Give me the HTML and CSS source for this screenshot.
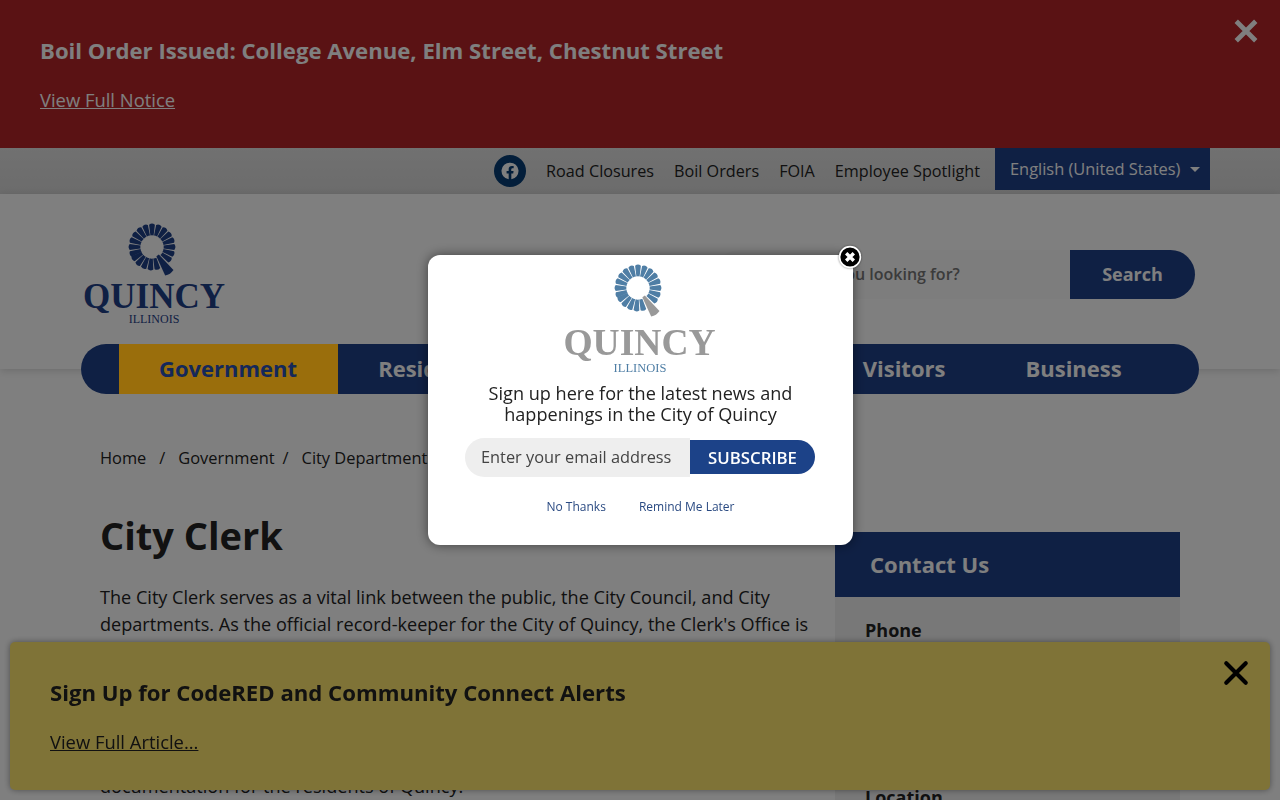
FILE: index.html
```html
<!DOCTYPE html>
<html>
<head>
  <title>City Clerk - Quincy, Illinois</title>
  <link rel="stylesheet" href="styles.css">
</head>
<body>
  <svg class="sprite" width="0" height="0">
    <defs>
      <path id="ray" d="M-1.6,-11.5 L-2.9,-22.3 Q0,-24.6 2.9,-22.3 L1.6,-11.5 Q0,-12 -1.6,-11.5 Z"/>
      <g id="sun">
        <use href="#ray"/>
        <use href="#ray" transform="rotate(18)"/>
        <use href="#ray" transform="rotate(36)"/>
        <use href="#ray" transform="rotate(54)"/>
        <use href="#ray" transform="rotate(72)"/>
        <use href="#ray" transform="rotate(90)"/>
        <use href="#ray" transform="rotate(108)"/>
        <use href="#ray" transform="rotate(126)"/>
        <use href="#ray" transform="rotate(166)"/>
        <use href="#ray" transform="rotate(184)"/>
        <use href="#ray" transform="rotate(202)"/>
        <use href="#ray" transform="rotate(220)"/>
        <use href="#ray" transform="rotate(238)"/>
        <use href="#ray" transform="rotate(252)"/>
        <use href="#ray" transform="rotate(270)"/>
        <use href="#ray" transform="rotate(288)"/>
        <use href="#ray" transform="rotate(306)"/>
        <use href="#ray" transform="rotate(324)"/>
        <use href="#ray" transform="rotate(342)"/>
      </g>
      <path id="tail" d="M-1.5,-10 L-5,-31 Q0,-33 5,-31 L1.5,-10 Z" transform="rotate(146)"/>
    </defs>
  </svg>

  <section class="alert-top">
    <h3>Boil Order Issued: College Avenue, Elm Street, Chestnut Street</h3>
    <a href="#">View Full Notice</a>
    <button class="alert-close" aria-label="Close">
      <svg viewBox="0 0 24 24"><path d="M3 3 L21 21 M21 3 L3 21"/></svg>
    </button>
  </section>

  <div class="utility">
    <div class="utility-inner">
      <a class="fb" href="#" aria-label="Facebook">
        <svg viewBox="0 0 24 24"><path d="M12 2a10 10 0 0 0-1.6 19.9v-7H7.9V12h2.5V9.8c0-2.5 1.5-3.9 3.8-3.9 1.1 0 2.2.2 2.2.2v2.5h-1.3c-1.2 0-1.6.8-1.6 1.6V12h2.8l-.4 2.9h-2.3v7A10 10 0 0 0 12 2z"/></svg>
      </a>
      <a href="#">Road Closures</a>
      <a href="#">Boil Orders</a>
      <a href="#">FOIA</a>
      <a href="#">Employee Spotlight</a>
      <div class="lang">English (United States)<span class="caret"></span></div>
    </div>
  </div>

  <header class="site-header">
    <div class="header-row">
      <a class="logo" href="#">
        <svg class="logo-sun" viewBox="-25 -25 50 50">
          <use href="#sun"/>
          <use href="#tail"/>
        </svg>
        <span class="logo-name">QUINCY</span>
        <span class="logo-state">ILLINOIS</span>
      </a>
      <form class="search">
        <input type="text" placeholder="What are you looking for?">
        <button type="button">Search</button>
      </form>
    </div>
    <nav class="main-nav">
      <a class="active" href="#">Government</a>
      <a href="#">Residents</a>
      <a href="#">Pay</a>
      <a href="#">How Do I</a>
      <a href="#">Visitors</a>
      <a href="#">Business</a>
    </nav>
  </header>

  <div class="breadcrumb">
    <a href="#">Home</a><span>/</span>
    <a href="#">Government</a><span>/</span>
    <a href="#">City Departments</a><span>/</span>
    <a href="#">City Clerk</a>
  </div>

  <main class="content">
    <article class="article">
      <h1>City Clerk</h1>
      <p>The City Clerk serves as a vital link between the public, the City Council, and City departments. As the official record-keeper for the City of Quincy, the Clerk's Office is responsible for maintaining accurate records of all Council proceedings, ordinances, resolutions and other official municipal documents. The office also issues a range of licenses and permits, supports local elections, responds to public records requests and works every day to provide clear, reliable access to public information, meeting agendas, minutes, certified copies and other important records and<br>documentation for the residents of Quincy.</p>
    </article>
    <aside class="contact">
      <h2>Contact Us</h2>
      <div class="contact-body">
        <h4 class="contact-phone">Phone</h4>
        <h4>Location</h4>
      </div>
    </aside>
  </main>

  <div class="overlay"></div>

  <section class="alert-bottom">
    <h3>Sign Up for CodeRED and Community Connect Alerts</h3>
    <a href="#">View Full Article...</a>
    <button class="alert-close" aria-label="Close">
      <svg viewBox="0 0 24 24"><path d="M3 3 L21 21 M21 3 L3 21"/></svg>
    </button>
  </section>

  <div class="modal">
    <button class="modal-close" aria-label="Close">
      <svg viewBox="0 0 24 24"><circle cx="12" cy="12" r="10.4"/><path d="M8.2 8.2 L15.8 15.8 M15.8 8.2 L8.2 15.8"/></svg>
    </button>
    <div class="modal-logo">
      <svg class="logo-sun" viewBox="-25 -25 50 50">
        <use href="#sun"/>
        <use class="tail-grey" href="#tail"/>
      </svg>
      <span class="logo-name">QUINCY</span>
      <span class="logo-state">ILLINOIS</span>
    </div>
    <p class="modal-text">Sign up here for the latest news and happenings in the City of Quincy</p>
    <form class="subscribe">
      <input type="text" placeholder="Enter your email address">
      <button type="button">SUBSCRIBE</button>
    </form>
    <div class="modal-links">
      <a href="#">No Thanks</a>
      <a href="#">Remind Me Later</a>
    </div>
  </div>
</body>
</html>
```

FILE: styles.css
```css
:root {
  --navy: #1f4189;
  --gold: #9a6e0c;
  --red: #b42428;
  --text: #222222;
}

* {
  margin: 0;
  padding: 0;
  box-sizing: border-box;
  font-family: 'Open Sans', 'Liberation Sans', sans-serif;
}

html, body {
  height: 800px;
  overflow: hidden;
}

body {
  background-color: #ffffff;
  color: var(--text);
}

.sprite {
  position: absolute;
}

a {
  color: inherit;
}

button {
  border: 0;
  background: none;
  cursor: pointer;
}

/* top alert */
.alert-top {
  position: relative;
  height: 148px;
  padding: 36px 40px 0;
  background-color: var(--red);
  color: #ffffff;
}

.alert-top h3 {
  font-size: 22.15px;
  font-weight: 700;
  line-height: 28px;
  margin-bottom: 23px;
}

.alert-top a {
  font-size: 18.4px;
  line-height: 26px;
}

.alert-close {
  position: absolute;
  top: 18px;
  right: 21px;
  width: 26px;
  height: 26px;
}

.alert-close svg {
  display: block;
  stroke: #ffffff;
  stroke-width: 4.4;
  fill: none;
}

/* utility bar */
.utility {
  height: 46px;
  background: linear-gradient(#e2e2e2, #d8d8d8);
}

.utility-inner {
  display: flex;
  justify-content: flex-end;
  align-items: flex-start;
  gap: 20px;
  width: 1210px;
  height: 42px;
  line-height: 46px;
  font-size: 16.2px;
}

.utility-inner > a {
  text-decoration: none;
}

.fb {
  display: flex;
  align-items: center;
  justify-content: center;
  width: 32px;
  height: 32px;
  margin-top: 7px;
  border-radius: 50%;
  background-color: #073d74;
}

.fb svg {
  width: 20px;
  height: 20px;
  fill: #ffffff;
}

.lang {
  display: flex;
  align-items: center;
  width: 215px;
  height: 42px;
  margin-left: -5px;
  padding-left: 15px;
  background-color: var(--navy);
  color: #ffffff;
  font-size: 16.4px;
  line-height: 42px;
}

.caret {
  margin-left: 10px;
  border-top: 5px solid #ffffff;
  border-left: 5px solid transparent;
  border-right: 5px solid transparent;
}

/* header */
.site-header {
  position: relative;
  height: 175px;
  padding: 0 81px;
  background-color: #ffffff;
  box-shadow: 0 2px 8px rgba(0, 0, 0, 0.15);
}

.header-row {
  display: flex;
  justify-content: space-between;
  height: 150px;
}

.logo {
  display: flex;
  flex-direction: column;
  align-items: center;
  width: 146px;
  padding-top: 28px;
  text-decoration: none;
  color: var(--navy);
}

.logo-sun {
  display: block;
  width: 50px;
  height: 50px;
  margin-left: -5px;
  overflow: visible;
  fill: var(--navy);
}

.logo-name {
  font-family: 'Liberation Serif', serif;
  font-weight: 700;
  font-size: 35px;
  line-height: 36px;
  margin-top: 7px;
}

.logo-state {
  font-family: 'Liberation Serif', serif;
  font-size: 12px;
  line-height: 14px;
  margin-top: -3px;
}

.search {
  display: flex;
  margin-top: 56px;
  margin-right: 4px;
  height: 49px;
}

.search input {
  width: 355px;
  height: 49px;
  padding: 0 0 2px 47px;
  border: 0;
  border-radius: 25px 0 0 25px;
  background-color: #fbfbfb;
  font-size: 16px;
  font-weight: 600;
}

.search input::placeholder {
  color: #777777;
}

.search button {
  width: 125px;
  height: 49px;
  padding-bottom: 2px;
  border-radius: 0 25px 25px 0;
  background-color: var(--navy);
  color: #ffffff;
  font-size: 18px;
  font-weight: 700;
}

.main-nav {
  display: flex;
  height: 50px;
  padding-left: 38px;
  border-radius: 25px;
  background-color: var(--navy);
}

.main-nav a {
  padding: 0 40px;
  font-size: 22px;
  font-weight: 700;
  line-height: 48px;
  color: #ffffff;
  text-decoration: none;
}

.main-nav a.active {
  position: relative;
  z-index: 11;
  padding-right: 41px;
  background-color: var(--gold);
  color: #14285a;
}

/* breadcrumb */
.breadcrumb {
  display: flex;
  gap: 13px;
  padding: 0 100px;
  margin-top: 77px;
  font-size: 16.4px;
  line-height: 24px;
}

.breadcrumb a {
  text-decoration: none;
}

.breadcrumb span:nth-of-type(2) {
  margin-left: -5px;
}

/* main content */
.content {
  display: flex;
  gap: 25px;
  padding: 0 100px;
  margin-top: 45px;
}

.article {
  width: 710px;
}

.article h1 {
  font-size: 38px;
  font-weight: 700;
  line-height: 40px;
  margin-bottom: 29px;
}

.article p {
  font-size: 18.1px;
  line-height: 27px;
}

.contact {
  width: 345px;
  margin-top: 17px;
}

.contact h2 {
  height: 65px;
  padding-left: 35px;
  background-color: var(--navy);
  color: #ffffff;
  font-size: 22px;
  font-weight: 700;
  line-height: 65px;
}

.contact-body {
  height: 400px;
  padding: 20px 30px;
  background-color: #f0f0f0;
}

.contact-body h4 {
  font-size: 18px;
  font-weight: 700;
  line-height: 27px;
}

.contact-phone {
  margin-bottom: 140px;
}

/* dim layer and things above it */
.overlay {
  position: fixed;
  inset: 0;
  z-index: 10;
  background-color: rgba(0, 0, 0, 0.5);
}

.alert-bottom {
  position: fixed;
  left: 10px;
  right: 10px;
  bottom: 10px;
  z-index: 5;
  height: 148px;
  padding: 36px 40px 0;
  border-radius: 5px;
  background-color: #fee66e;
  box-shadow: 0 0 6px rgba(0, 0, 0, 0.4);
}

.alert-bottom h3 {
  font-size: 22.15px;
  font-weight: 700;
  line-height: 28px;
  margin-bottom: 23px;
}

.alert-bottom a {
  font-size: 18.4px;
  line-height: 26px;
}

.alert-bottom .alert-close {
  top: 18px;
}

.alert-bottom .alert-close svg {
  stroke: #000000;
  stroke-width: 3.8;
  stroke-linecap: round;
}

.modal {
  position: fixed;
  left: 428px;
  top: 255px;
  z-index: 20;
  width: 425px;
  height: 290px;
  padding-top: 8px;
  border-radius: 12px;
  background-color: #ffffff;
  box-shadow: 0 0 12px rgba(0, 0, 0, 0.5);
  text-align: center;
}

.modal-close {
  position: absolute;
  top: -10px;
  right: -9px;
  width: 24px;
  height: 24px;
}

.modal-close svg {
  display: block;
  filter: drop-shadow(0 0 1px rgba(0, 0, 0, 0.5));
}

.modal-close circle {
  fill: #000000;
  stroke: #ffffff;
  stroke-width: 1.6;
}

.modal-close path {
  stroke: #ffffff;
  stroke-width: 3.4;
  fill: none;
}

.modal-logo {
  display: flex;
  flex-direction: column;
  align-items: center;
  color: #999999;
  height: 111px;
}

.modal-logo .logo-sun {
  width: 50px;
  height: 50px;
  fill: #4f7ea5;
}

.modal-logo .tail-grey {
  fill: #999999;
}

.modal-logo .logo-name {
  font-size: 37.5px;
  line-height: 38px;
  margin-top: 11px;
  margin-left: -2px;
}

.modal-logo .logo-state {
  font-size: 12.5px;
  color: #4f7ea5;
  margin-top: -1px;
  margin-left: -1px;
}

.modal-text {
  width: 330px;
  margin: 9px auto 0;
  font-size: 18.1px;
  line-height: 21px;
  color: #222222;
}

.subscribe {
  display: flex;
  align-items: flex-start;
  width: 350px;
  height: 39px;
  margin: 13px auto 0 37px;
}

.subscribe input {
  width: 225px;
  height: 39px;
  padding: 0 0 2px 16px;
  border: 0;
  border-radius: 20px 0 0 20px;
  background-color: #eeeeee;
  font-size: 16.35px;
}

.subscribe input::placeholder {
  color: #444444;
}

.subscribe button {
  width: 125px;
  height: 34px;
  margin-top: 2px;
  border-radius: 0 17px 17px 0;
  background-color: #1c4288;
  color: #ffffff;
  font-size: 16.8px;
  font-weight: 600;
}

.modal-links {
  display: flex;
  justify-content: center;
  gap: 33px;
  margin-top: 21px;
  font-size: 12px;
  line-height: 18px;
  color: #2a4a82;
}

.modal-links a {
  text-decoration: none;
}
```
